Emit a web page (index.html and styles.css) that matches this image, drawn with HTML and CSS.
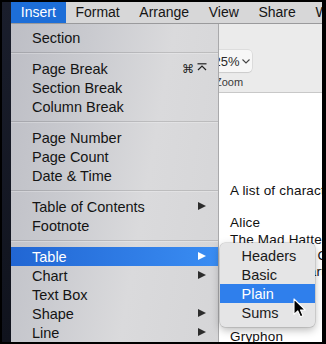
FILE: index.html
```html
<!DOCTYPE html>
<html lang="en">
<head>
    <meta charset="UTF-8">
    <meta name="viewport" content="width=device-width, initial-scale=1.0">
    <title>Insert menu</title>
    <link rel="stylesheet" href="styles.css">
</head>
<body>
    <div class="screen">
        <div class="strip"></div>
        <div class="main">
            <nav class="menubar">
                <span class="menu-title active">Insert</span>
                <span class="menu-title">Format</span>
                <span class="menu-title">Arrange</span>
                <span class="menu-title">View</span>
                <span class="menu-title">Share</span>
                <span class="menu-title">Window</span>
            </nav>

            <!-- app window under the menu -->
            <div class="app">
                <div class="toolbar">
                    <div class="zoom-group">
                        <div class="zoom-btn">125%
                            <svg class="chev" width="8" height="5" viewBox="0 0 8 5"><polyline points="0.5,0.5 4,4 7.5,0.5" fill="none" stroke="#444" stroke-width="1.1"/></svg>
                        </div>
                        <div class="zoom-label">Zoom</div>
                    </div>
                </div>
                <div class="doc">
                    <p>A list of characters</p>
                    <p>&nbsp;</p>
                    <p>Alice</p>
                    <p>The Mad Hatter</p>
                    <p>The Cheshire Cat</p>
                    <p>Queen of Hearts</p>
                    <p>Dormouse</p>
                    <p>The Duchess</p>
                    <p>Bill</p>
                    <p>Gryphon</p>
                </div>
            </div>

            <ul class="dropdown">
                <li class="item">Section</li>
                <li class="sep"></li>
                <li class="item">Page Break
                    <span class="shortcut">⌘<svg width="10" height="8" viewBox="0 0 10 8"><line x1="0.5" y1="0.8" x2="9.5" y2="0.8" stroke="#222" stroke-width="1.2"/><polyline points="1,7 5,3 9,7" fill="none" stroke="#222" stroke-width="1.2"/></svg></span>
                </li>
                <li class="item">Section Break</li>
                <li class="item">Column Break</li>
                <li class="sep"></li>
                <li class="item">Page Number</li>
                <li class="item">Page Count</li>
                <li class="item">Date &amp; Time</li>
                <li class="sep"></li>
                <li class="item has-sub">Table of Contents</li>
                <li class="item">Footnote</li>
                <li class="sep"></li>
                <li class="item has-sub selected">Table</li>
                <li class="item has-sub">Chart</li>
                <li class="item">Text Box</li>
                <li class="item has-sub">Shape</li>
                <li class="item has-sub">Line</li>
            </ul>

            <ul class="submenu">
                <li class="item">Headers</li>
                <li class="item">Basic</li>
                <li class="item selected">Plain</li>
                <li class="item">Sums</li>
            </ul>

            <svg class="cursor" width="14" height="21" viewBox="0 0 14 21">
                <path d="M1 1 L1 16.5 L4.8 12.9 L7.4 18.8 L10 17.7 L7.5 12 L12.3 12 Z" fill="#000" stroke="#fff" stroke-width="1.1" stroke-linejoin="round"/>
            </svg>
        </div>
    </div>
</body>
</html>
```

FILE: styles.css
```css
* {
    box-sizing: border-box;
    margin: 0;
    padding: 0;
}

body {
    background: #000;
    font-family: 'Liberation Sans', Arial, sans-serif;
    color: #141414;
}

.screen {
    display: flex;
    width: 320px;
    height: 340px;
    margin: 2px 4px 2px 2px;
    overflow: hidden;
}

.strip {
    width: 9px;
    background: linear-gradient(#1a1e2c, #10131d);
}

.main {
    position: relative;
    flex: 1;
    display: flex;
    flex-direction: column;
    overflow: hidden;
}

.menubar {
    display: flex;
    height: 22px;
    background: #d7d7d8;
    border-bottom: 1px solid #9a9a9c;
    font-size: 14px;
    line-height: 21px;
}

.menu-title {
    padding: 0 9.8px;
    white-space: nowrap;
    color: #151515;
}

.menu-title.active {
    background: #1d6ed8;
    color: #fff;
}

/* app window */
.app {
    flex: 1;
    display: flex;
    flex-direction: column;
    background: #fff;
}

.toolbar {
    height: 69px;
    padding: 26px 0 0 193px;
    background: #ebebeb;
    border-bottom: 1px solid #c8c8c8;
}

.zoom-group {
    width: 48px;
    text-align: center;
}

.zoom-btn {
    display: flex;
    align-items: center;
    justify-content: center;
    gap: 2px;
    height: 22px;
    background: #f7f7f7;
    border-radius: 4px;
    box-shadow: 0 0 0 0.5px rgba(0,0,0,0.12), 0 1px 1px rgba(0,0,0,0.08);
    font-size: 13px;
    color: #2a2a2a;
}

.zoom-label {
    margin-top: 4px;
    padding-left: 2px;
    font-size: 11px;
    color: #3a3a3a;
}

.doc {
    padding: 90px 0 0 219px;
    font-size: 13.5px;
    line-height: 16.2px;
    letter-spacing: 0.2px;
    color: #111;
    white-space: nowrap;
}

/* Insert menu */
.dropdown {
    position: absolute;
    left: 0;
    top: 22px;
    width: 208px;
    height: 330px;
    padding-top: 4px;
    list-style: none;
    background: linear-gradient(100deg, #bdbec5 0%, #c9cacf 30%, #dadadc 62%, #d5d5d7 100%);
    border-right: 1px solid #a9a9ab;
    font-size: 14.5px;
}

.item {
    position: relative;
    display: flex;
    align-items: center;
    height: 19px;
    padding-left: 21px;
    white-space: nowrap;
}

.sep {
    height: 1px;
    margin: 5px 0 6px;
    background: rgba(0,0,0,0.13);
    box-shadow: 0 1px 0 rgba(255,255,255,0.25);
}

.has-sub:after {
    content: "";
    position: absolute;
    right: 12px;
    top: 5px;
    border-left: 8px solid #2c2c2c;
    border-top: 4.5px solid transparent;
    border-bottom: 4.5px solid transparent;
}

.dropdown .selected {
    background: linear-gradient(to right, #2166d3, #3a8df3);
    color: #fff;
}

.dropdown .selected:after {
    border-left-color: #fff;
}

.shortcut {
    display: flex;
    align-items: center;
    gap: 3px;
    margin-left: auto;
    margin-right: 11px;
    font-family: 'DejaVu Sans', sans-serif;
    font-size: 12px;
    color: #222;
}

.shortcut svg {
    margin-top: -3px;
}

/* Table submenu */
.submenu {
    position: absolute;
    left: 209px;
    top: 241px;
    width: 95px;
    height: 84px;
    padding-top: 3px;
    list-style: none;
    background: #e5e5e6;
    border-radius: 5px;
    box-shadow: 0 0 0 0.5px rgba(0,0,0,0.18), 0 3px 9px rgba(0,0,0,0.28);
    font-size: 14.5px;
}

.submenu .item {
    padding-left: 21.5px;
    color: #1a1a1a;
}

.submenu .selected {
    background: #2f7fec;
    color: #fff;
}

.cursor {
    position: absolute;
    left: 282px;
    top: 296px;
}
```
